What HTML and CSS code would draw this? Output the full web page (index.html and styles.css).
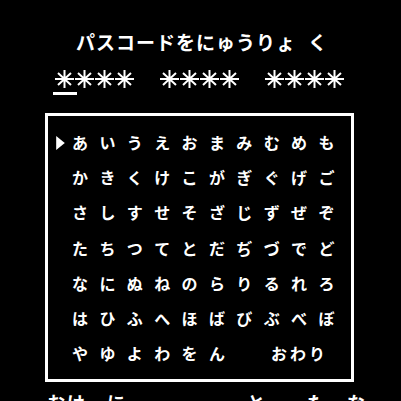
FILE: index.html
```html
<!DOCTYPE html>
<html lang="ja">
<head>
<meta charset="utf-8">
<link rel="stylesheet" href="styles.css">
</head>
<body>
<div class="screen">
  <div class="title">パスコードをにゅうりょ<span class="gap">く</span></div>
  <div class="code">
    <div class="group">
      <svg class="ast" viewBox="0 0 19 18"><path d="M9.5 0V18M0 9H19M3 3L16 15M16 3L3 15"/></svg>
      <svg class="ast" viewBox="0 0 19 18"><path d="M9.5 0V18M0 9H19M3 3L16 15M16 3L3 15"/></svg>
      <svg class="ast" viewBox="0 0 19 18"><path d="M9.5 0V18M0 9H19M3 3L16 15M16 3L3 15"/></svg>
      <svg class="ast" viewBox="0 0 19 18"><path d="M9.5 0V18M0 9H19M3 3L16 15M16 3L3 15"/></svg>
    </div>
    <div class="group">
      <svg class="ast" viewBox="0 0 19 18"><path d="M9.5 0V18M0 9H19M3 3L16 15M16 3L3 15"/></svg>
      <svg class="ast" viewBox="0 0 19 18"><path d="M9.5 0V18M0 9H19M3 3L16 15M16 3L3 15"/></svg>
      <svg class="ast" viewBox="0 0 19 18"><path d="M9.5 0V18M0 9H19M3 3L16 15M16 3L3 15"/></svg>
      <svg class="ast" viewBox="0 0 19 18"><path d="M9.5 0V18M0 9H19M3 3L16 15M16 3L3 15"/></svg>
    </div>
    <div class="group">
      <svg class="ast" viewBox="0 0 19 18"><path d="M9.5 0V18M0 9H19M3 3L16 15M16 3L3 15"/></svg>
      <svg class="ast" viewBox="0 0 19 18"><path d="M9.5 0V18M0 9H19M3 3L16 15M16 3L3 15"/></svg>
      <svg class="ast" viewBox="0 0 19 18"><path d="M9.5 0V18M0 9H19M3 3L16 15M16 3L3 15"/></svg>
      <svg class="ast" viewBox="0 0 19 18"><path d="M9.5 0V18M0 9H19M3 3L16 15M16 3L3 15"/></svg>
    </div>
  </div>
  <div class="underline"></div>
  <div class="box">
    <div class="grid">
      <span class="cur"><svg class="tri" viewBox="0 0 8 13"><path d="M0 0L8 6.5L0 13Z"/></svg></span>
      <span>あ</span><span>い</span><span>う</span><span>え</span><span>お</span><span>ま</span><span>み</span><span>む</span><span>め</span><span>も</span>
      <span class="cur"></span>
      <span>か</span><span>き</span><span>く</span><span>け</span><span>こ</span><span>が</span><span>ぎ</span><span>ぐ</span><span>げ</span><span>ご</span>
      <span class="cur"></span>
      <span>さ</span><span>し</span><span>す</span><span>せ</span><span>そ</span><span>ざ</span><span>じ</span><span>ず</span><span>ぜ</span><span>ぞ</span>
      <span class="cur"></span>
      <span>た</span><span>ち</span><span>つ</span><span>て</span><span>と</span><span>だ</span><span>ぢ</span><span>づ</span><span>で</span><span>ど</span>
      <span class="cur"></span>
      <span>な</span><span>に</span><span>ぬ</span><span>ね</span><span>の</span><span>ら</span><span>り</span><span>る</span><span>れ</span><span>ろ</span>
      <span class="cur"></span>
      <span>は</span><span>ひ</span><span>ふ</span><span>へ</span><span>ほ</span><span>ば</span><span>び</span><span>ぶ</span><span>べ</span><span>ぼ</span>
      <span class="cur"></span>
      <span>や</span><span>ゆ</span><span>よ</span><span>わ</span><span>を</span><span>ん</span><span></span>
      <span class="end">おわり</span>
    </div>
  </div>
  <div class="footer">おけ　に　　　　　　と　　た　な</div>
</div>
</body>
</html>
```
FILE: styles.css
```css
html, body {
  margin: 0;
  padding: 0;
  background: #000;
  overflow: hidden;
}
.screen {
  width: 401px;
  height: 401px;
  overflow: hidden;
  background: #000;
  color: #fff;
  font-family: "Noto Sans CJK JP", "Noto Sans", sans-serif;
}
.title {
  margin-top: 32px;
  padding-left: 76px;
  font-size: 19px;
  line-height: 20px;
  letter-spacing: 1px;
  white-space: nowrap;
  font-weight: 700;
}
.title .gap {
  margin-left: 12px;
}
.code {
  display: flex;
  gap: 26px;
  margin-top: 18px;
  padding-left: 55px;
  height: 18px;
}
.group {
  display: flex;
  gap: 1px;
}
.ast {
  width: 19px;
  height: 18px;
  display: block;
}
.ast path {
  stroke: #fff;
  stroke-width: 2;
  fill: none;
}
.underline {
  margin-top: 4px;
  margin-left: 53px;
  width: 24px;
  height: 3px;
  background: #fff;
}
.box {
  margin-top: 18px;
  margin-left: 45px;
  width: 309px;
  height: 269px;
  box-sizing: border-box;
  border: 3px solid #fff;
  padding: 9px 0 0 8px;
}
.grid {
  display: grid;
  grid-template-columns: 10.3px repeat(10, 27.4px);
  grid-auto-rows: 35.2px;
  font-size: 16px;
  font-weight: 700;
  line-height: 35.2px;
}
.grid span {
  text-align: center;
}
.grid .cur {
  display: flex;
  align-items: center;
}
.tri {
  width: 9px;
  height: 14px;
  display: block;
  margin-left: 0;
}
.tri path {
  fill: #fff;
}
.grid .end {
  grid-column: 9 / span 3;
  text-align: left;
  padding-left: 13px;
  letter-spacing: 3px;
}
.footer {
  margin-top: 10px;
  padding-left: 47px;
  font-size: 18px;
  line-height: 20px;
  letter-spacing: 2px;
  white-space: nowrap;
  font-weight: 700;
}
```
